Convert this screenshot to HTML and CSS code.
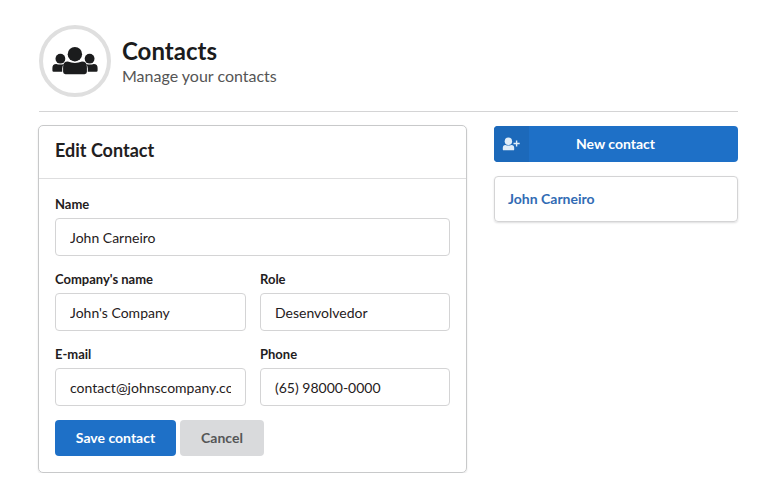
FILE: index.html
```html
<!DOCTYPE html>
<html lang="en">
<head>
<meta charset="utf-8">
<title>Contacts</title>
<link rel="stylesheet" href="styles.css">
</head>
<body>
<div class="page">
  <header class="page-header">
    <div class="badge">
      <svg width="46" height="28" viewBox="0 0 46 28" fill="currentColor" aria-hidden="true">
        <circle cx="22.9" cy="7.2" r="7.2"/>
        <path d="M15.8 14.6Q22.9 17.2 30 14.6Q34.9 14.6 34.9 20V24.8Q34.9 27.2 32.5 27.2H13.5Q11.1 27.2 11.1 24.8V20Q11.1 14.6 15.8 14.6Z"/>
        <circle cx="8.4" cy="11.7" r="4.9"/>
        <circle cx="37.6" cy="11.7" r="4.9"/>
        <path d="M4.2 17Q8 18.2 12 17Q10.2 18.8 10.2 21.5V24.8H1.6Q.4 24.8 .4 23.6V21Q.4 17 4.2 17Z"/>
        <path d="M41.8 17Q38 18.2 34 17Q35.8 18.8 35.8 21.5V24.8H44.4Q45.6 24.8 45.6 23.6V21Q45.6 17 41.8 17Z"/>
      </svg>
    </div>
    <div>
      <h1>Contacts</h1>
      <p class="subtitle">Manage your contacts</p>
    </div>
  </header>
  <main class="columns">
    <section class="card">
      <h2>Edit Contact</h2>
      <form class="form">
        <label class="field wide">Name<input type="text" value="John Carneiro"></label>
        <label class="field">Company's name<input type="text" value="John's Company"></label>
        <label class="field">Role<input type="text" value="Desenvolvedor"></label>
        <label class="field">E-mail<input type="text" value="contact@johnscompany.com"></label>
        <label class="field">Phone<input type="text" value="(65) 98000-0000"></label>
        <div class="actions wide">
          <button type="button" class="button primary save">Save contact</button>
          <button type="button" class="button cancel">Cancel</button>
        </div>
      </form>
    </section>
    <aside>
      <button type="button" class="button primary new">
        <span class="new-icon">
          <svg width="18" height="14" viewBox="0 0 18 14" fill="currentColor" aria-hidden="true">
            <ellipse cx="6.4" cy="4.2" rx="3.7" ry="3.8"/>
            <path d="M3.4 8Q6.4 9 9.4 8Q12.2 8.2 12.2 11V12.4Q12.2 13.3 11.3 13.3H1.7Q.8 13.3 .8 12.4V11Q.8 8.2 3.4 8Z"/>
            <path d="M13.9 3.5H15.3V5.8H17.7V7.2H15.3V9.6H13.9V7.2H11.5V5.8H13.9Z"/>
          </svg>
        </span>
        <span class="new-label">New contact</span>
      </button>
      <a class="contact">John Carneiro</a>
    </aside>
  </main>
</div>
</body>
</html>
```
FILE: styles.css
```css
* { box-sizing: border-box; }
body {
  margin: 0;
  background: #fff;
  color: #1f2021;
  font-family: Lato, "Liberation Sans", sans-serif;
  font-size: 14px;
}
h1, h2, p { margin: 0; }
.page { padding: 25px 28px 0 39px; }
.page-header {
  display: flex;
  gap: 11px;
  height: 87px;
  border-bottom: 1px solid #d4d4d5;
}
.badge {
  display: flex;
  align-items: center;
  justify-content: center;
  width: 72px;
  height: 72px;
  border: 4px solid #dfdfdf;
  border-radius: 50%;
  color: #1b1c1d;
}
h1 {
  margin-top: 11px;
  font-size: 24px;
  line-height: 30px;
  color: #1b1c1d;
}
.subtitle {
  font-size: 16px;
  line-height: 20px;
  color: #555;
}
.columns {
  display: grid;
  grid-template-columns: 429px 244px;
  gap: 27px;
  margin: 13px 0 0 -1px;
}
.card {
  height: 348px;
  border: 1px solid #c8c9ca;
  border-radius: 5px;
  box-shadow: 0 1px 2px rgba(34, 36, 38, .12);
}
h2 {
  height: 53px;
  padding-left: 16px;
  border-bottom: 1px solid #dededf;
  font-size: 18px;
  line-height: 49px;
}
.form {
  display: grid;
  grid-template-columns: 191px 190px;
  gap: 14px;
  padding: 16px;
}
.wide { grid-column: 1 / -1; }
.field {
  display: block;
  height: 61px;
  font-size: 13px;
  font-weight: 700;
  line-height: 18px;
}
.field input {
  display: block;
  width: 100%;
  height: 38px;
  margin-top: 5px;
  padding: 0 14px;
  border: 1px solid #d4d4d5;
  border-radius: 4px;
  outline: 0;
  background: #fff;
  color: #1f2021;
  font: 14px Lato, "Liberation Sans", sans-serif;
}
.actions {
  display: flex;
  gap: 4px;
}
.button {
  height: 36px;
  padding: 0;
  border: 0;
  border-radius: 4px;
  font: 700 14px/36px Lato, "Liberation Sans", sans-serif;
}
.primary {
  background: #1e70c7;
  color: #fff;
}
.save { width: 121px; }
.cancel {
  width: 84px;
  background: #d9dadc;
  color: #555657;
}
.new {
  display: flex;
  width: 244px;
  margin-top: 1px;
  overflow: hidden;
}
.new-icon {
  display: flex;
  align-items: center;
  width: 35px;
  height: 36px;
  padding-left: 8px;
  background: #1c69ba;
  color: #e0edf8;
}
.new-label {
  flex: 1;
  padding-left: 47px;
  text-align: left;
  white-space: nowrap;
}
.contact {
  display: block;
  height: 46px;
  margin-top: 14px;
  padding-left: 13px;
  border: 1px solid #d4d4d5;
  border-radius: 4px;
  box-shadow: 0 1px 2px rgba(34, 36, 38, .15);
  color: #316bb4;
  font-weight: 700;
  line-height: 44px;
}
```
